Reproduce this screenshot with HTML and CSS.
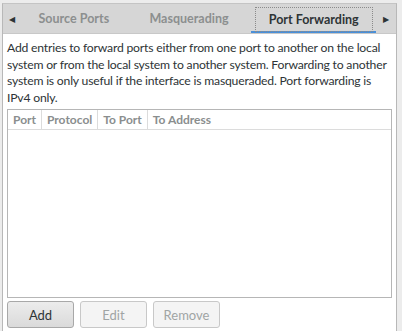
FILE: index.html
```html
<!DOCTYPE html>
<html lang="en">
<head>
  <meta charset="UTF-8" />
  <title>Port Forwarding</title>
  <link rel="stylesheet" href="styles.css">
</head>
<body>
  <div class="panel">
    <div class="tabs">
      <span class="arrow">&#9664;</span>
      <div class="tab">Source Ports</div>
      <div class="tab">Masquerading</div>
      <div class="tab active"><span class="focus">Port Forwarding</span></div>
      <span class="arrow">&#9654;</span>
    </div>
    <div class="page">
      <p class="info">Add entries to forward ports either from one port to another on the local<br>
        system or from the local system to another system. Forwarding to another<br>
        system is only useful if the interface is masqueraded. Port forwarding is<br>
        IPv4 only.</p>
      <div class="list">
        <div class="list-head">
          <div class="col c-port">Port</div>
          <div class="col c-proto">Protocol</div>
          <div class="col c-toport">To Port</div>
          <div class="col c-addr">To Address</div>
        </div>
      </div>
      <div class="buttons">
        <button class="btn">Add</button>
        <button class="btn" disabled>Edit</button>
        <button class="btn" disabled>Remove</button>
      </div>
    </div>
  </div>
</body>
</html>
```

FILE: styles.css
```css
body {
  margin: 0;
  background: #ececec;
  font-family: Lato, sans-serif;
  font-size: 12px;
  color: #2e3436;
}

.panel {
  margin: 3px 5px 0 2px;
  height: 328px;
  display: flex;
  flex-direction: column;
  border-left: 1px solid #b8b8b8;
  border-right: 1px solid #b8b8b8;
  border-top: 1px solid #c4c4c4;
  box-sizing: border-box;
}

.tabs {
  height: 29px;
  background: #d6d6d6;
  display: flex;
  align-items: stretch;
  border-bottom: 1px solid #c8c8c8;
}

.arrow {
  width: 20px;
  font-size: 8px;
  color: #2e3436;
  display: flex;
  align-items: center;
  justify-content: center;
}

.tabs .arrow:first-child {
  width: 18px;
}

.tab {
  width: 125px;
  display: flex;
  align-items: center;
  justify-content: center;
  color: #8c8f8f;
  font-weight: 700;
  font-size: 12.5px;
}

.tabs .tab:first-of-type {
  width: 106px;
}

.tab.active {
  color: #2e3436;
  border-bottom: 2px solid #4a90d9;
  padding-top: 3px;
  box-sizing: border-box;
}

.focus {
  border: 1px dotted #8a8a8a;
  padding: 4px 13px;
}

.page {
  flex: 1;
  background: #fff;
  padding: 6px 4px 3px 4px;
  display: flex;
  flex-direction: column;
}

.info {
  margin: 0 0 3px 0;
  line-height: 16.5px;
  font-size: 12.2px;
  letter-spacing: -0.2px;
  white-space: nowrap;
}

.list {
  flex: 1;
  border: 1px solid #b6b6b6;
}

.list-head {
  display: flex;
  height: 19px;
  border-bottom: 1px solid #dcdcdc;
}

.col {
  color: #8a8e8e;
  font-weight: 700;
  font-size: 12px;
  line-height: 19px;
  padding: 0 5px;
  border-right: 1px solid #dcdcdc;
}

.c-addr {
  border-right: none;
}

.buttons {
  display: flex;
  gap: 6px;
  padding-top: 3px;
}

.btn {
  width: 67px;
  height: 27px;
  font-family: Lato, sans-serif;
  font-size: 13px;
  color: #2e3436;
  border: 1px solid #a8a8a8;
  border-radius: 3px;
  background: linear-gradient(#ececec, #dadada);
}

.btn:disabled {
  color: #a0a4a4;
  background: #f4f4f4;
  border-color: #c8c8c8;
}
```
